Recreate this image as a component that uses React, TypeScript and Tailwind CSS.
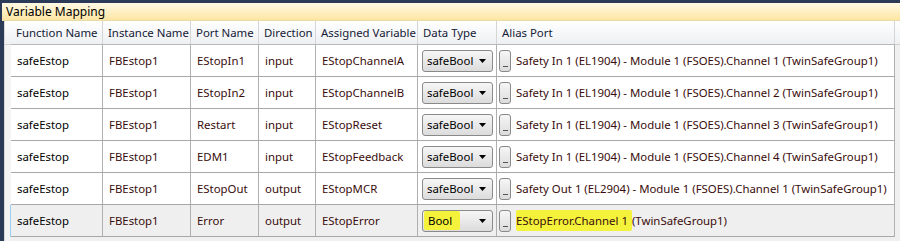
import React from "react";

type Row = {
  fn: string;
  inst: string;
  port: string;
  dir: string;
  variable: string;
  type: string;
  alias: string;
};

const rows: Row[] = [
  { fn: "safeEstop", inst: "FBEstop1", port: "EStopIn1", dir: "input", variable: "EStopChannelA", type: "safeBool", alias: "Safety In 1 (EL1904) - Module 1 (FSOES).Channel 1 (TwinSafeGroup1)" },
  { fn: "safeEstop", inst: "FBEstop1", port: "EStopIn2", dir: "input", variable: "EStopChannelB", type: "safeBool", alias: "Safety In 1 (EL1904) - Module 1 (FSOES).Channel 2 (TwinSafeGroup1)" },
  { fn: "safeEstop", inst: "FBEstop1", port: "Restart", dir: "input", variable: "EStopReset", type: "safeBool", alias: "Safety In 1 (EL1904) - Module 1 (FSOES).Channel 3 (TwinSafeGroup1)" },
  { fn: "safeEstop", inst: "FBEstop1", port: "EDM1", dir: "input", variable: "EStopFeedback", type: "safeBool", alias: "Safety In 1 (EL1904) - Module 1 (FSOES).Channel 4 (TwinSafeGroup1)" },
  { fn: "safeEstop", inst: "FBEstop1", port: "EStopOut", dir: "output", variable: "EStopMCR", type: "safeBool", alias: "Safety Out 1 (EL2904) - Module 1 (FSOES).Channel 1 (TwinSafeGroup1)" },
];

const headers = ["Function Name", "Instance Name", "Port Name", "Direction", "Assigned Variable", "Data Type", "Alias Port"];
const cols = "grid grid-cols-[92px_88px_68px_57px_102px_79px_398px]";

function Combo({ value, marked }: { value: string; marked?: boolean }) {
  return (
    <div className="ml-[4px] flex h-[22px] w-[71px] items-center justify-between rounded-[3px] border border-[#8a8a8a] bg-gradient-to-b from-[#f6f6f6] to-[#dcdcdc] pl-[1px] pr-[6px] text-black">
      <span className={marked ? "rounded-[2px] bg-[#f4f23a] py-[4px] pl-[4px] pr-[8px]" : "pl-[3px]"}>{value}</span>
      <svg width="7" height="4" viewBox="0 0 7 4">
        <path d="M0 0h7L3.5 4z" fill="#000" />
      </svg>
    </div>
  );
}

function DotButton() {
  return (
    <div className="ml-[2px] mr-[5px] flex h-[22px] w-[12px] shrink-0 items-end justify-center rounded-[3px] border border-[#8a8a8a] bg-gradient-to-b from-[#f6f6f6] to-[#dcdcdc] pb-[4px]">
      <div className="h-px w-[5px] bg-[#555]" />
    </div>
  );
}

function DataRow({ r, last }: { r: Row; last?: boolean }) {
  const cell = "flex items-center border-r border-[#b0b0b0] pl-[6px] whitespace-nowrap overflow-hidden";
  return (
    <div className={`${cols} h-[32px] border-b border-[#a8a8a8] ${last ? "bg-[#efefef]" : "bg-white"}`}>
      <div className={`${cell} text-black`}>{r.fn}</div>
      <div className={`${cell} text-[#3a0c0c]`}>{r.inst}</div>
      <div className={`${cell} text-[#3a0c0c]`}>{r.port}</div>
      <div className={`${cell} text-[#3a0c0c]`}>{r.dir}</div>
      <div className={`${cell} text-[#3a0c0c]`}>{r.variable}</div>
      <div className="flex items-center border-r border-[#b0b0b0]">
        <Combo value={r.type} marked={last} />
      </div>
      <div className="flex items-center overflow-hidden whitespace-nowrap border-r border-[#b0b0b0] text-[#3a0c0c]">
        <DotButton />
        {last ? (
          <span>
            <span className="rounded-[2px] bg-[#f4f23a] py-[3px] pr-[4px]">EStopError.Channel 1</span>(TwinSafeGroup1)
          </span>
        ) : (
          <span>{r.alias}</span>
        )}
      </div>
    </div>
  );
}

export default function App() {
  const lastRow: Row = { fn: "safeEstop", inst: "FBEstop1", port: "Error", dir: "output", variable: "EStopError", type: "Bool", alias: "" };
  return (
    <div className="flex h-[241px] w-[900px] flex-col overflow-hidden bg-[#2b3a57] font-['Noto_Sans',sans-serif] text-[11.4px] leading-none">
      <div className="h-[3px] shrink-0" />
      <div className="ml-[2px] flex h-[18px] shrink-0 items-center border-b border-[#e8d9a8] bg-gradient-to-b from-[#fff9e4] to-[#fde6a2] pl-[4px] text-[12px] text-black">
        Variable Mapping
      </div>
      <div className="flex flex-1 bg-[#f0f0f0]">
        <div className="w-[4px] shrink-0 bg-[#2b3a57]" />
        <div className="flex w-[7px] shrink-0 flex-col border-l border-[#d8d8d8] bg-[#f4f4f4]">
          <div className="h-[24px] border-b border-[#d0d0d0] bg-gradient-to-b from-white to-[#eef0f2]" />
          <div className="h-[160px]" />
          <div className="h-[32px] border-r border-[#99d1f0]" />
        </div>
        <div className="flex flex-col">
          <div className={`${cols} h-[24px] border-b border-[#b8b8b8] bg-gradient-to-b from-white to-[#eef0f3]`}>
            {headers.map((h) => (
              <div key={h} className="flex items-center whitespace-nowrap border-r border-[#d5d5d5] pl-[5px] text-[#142036]">
                {h}
              </div>
            ))}
          </div>
          {rows.map((r, i) => (
            <DataRow key={i} r={r} />
          ))}
          <DataRow r={lastRow} last />
        </div>
        <div className="flex flex-1 flex-col">
          <div className="h-[24px] border-b border-[#d0d0d0] bg-gradient-to-b from-white to-[#eef0f3]" />
        </div>
      </div>
    </div>
  );
}
